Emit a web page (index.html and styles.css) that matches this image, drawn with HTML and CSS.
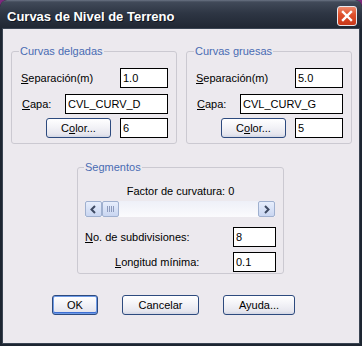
FILE: index.html
```html
<!DOCTYPE html>
<html lang="es">
<head>
  <meta charset="UTF-8">
  <title>Curvas de Nivel de Terreno</title>
  <link rel="stylesheet" href="styles.css">
</head>
<body>
  <div class="window">
    <div class="titlebar">
      <span class="title">Curvas de Nivel de Terreno</span>
      <span class="close">
        <svg width="12" height="12" viewBox="0 0 12 12"><path d="M2 2 L10 10 M10 2 L2 10" stroke="#fff" stroke-width="2.4" stroke-linecap="square"/></svg>
      </span>
    </div>

    <div class="client">
      <div class="groups">
        <fieldset class="group">
          <legend>Curvas delgadas</legend>
          <div class="row">
            <label><u>S</u>eparación(m)</label>
            <input type="text" class="field short" value="1.0">
          </div>
          <div class="row capa">
            <label><u>C</u>apa:</label>
            <input type="text" class="field long" value="CVL_CURV_D">
          </div>
          <div class="row color">
            <button class="btn colorbtn">C<u>o</u>lor...</button>
            <input type="text" class="field short" value="6">
          </div>
        </fieldset>

        <fieldset class="group">
          <legend>Curvas gruesas</legend>
          <div class="row">
            <label><u>S</u>eparación(m)</label>
            <input type="text" class="field short" value="5.0">
          </div>
          <div class="row capa">
            <label><u>C</u>apa:</label>
            <input type="text" class="field long" value="CVL_CURV_G">
          </div>
          <div class="row color">
            <button class="btn colorbtn">C<u>o</u>lor...</button>
            <input type="text" class="field short" value="5">
          </div>
        </fieldset>
      </div>

      <fieldset class="group segments">
        <legend>Segmentos</legend>
        <div class="factor">Factor de curvatura: 0</div>
        <div class="scrollbar">
          <span class="sb-btn">
            <svg width="9" height="9" viewBox="0 0 9 9"><path d="M6 1 L2.5 4.5 L6 8" fill="none" stroke="#3e4a63" stroke-width="2"/></svg>
          </span>
          <span class="sb-thumb">
            <svg width="7" height="6" viewBox="0 0 7 6"><path d="M0.5 0 V6 M2.5 0 V6 M4.5 0 V6 M6.5 0 V6" stroke="#8d9bbd" stroke-width="1"/></svg>
          </span>
          <span class="sb-track"></span>
          <span class="sb-btn">
            <svg width="9" height="9" viewBox="0 0 9 9"><path d="M3 1 L6.5 4.5 L3 8" fill="none" stroke="#3e4a63" stroke-width="2"/></svg>
          </span>
        </div>
        <div class="row seg">
          <label><u>N</u>o. de subdivisiones:</label>
          <input type="text" class="field num" value="8">
        </div>
        <div class="row seg minimo">
          <label><u>L</u>ongitud mínima:</label>
          <input type="text" class="field num" value="0.1">
        </div>
      </fieldset>

      <div class="actions">
        <button class="btn ok">OK</button>
        <button class="btn cancel">Cancelar</button>
        <button class="btn help">Ayuda...</button>
      </div>
    </div>
  </div>
</body>
</html>
```

FILE: styles.css
```css
body {
  margin: 0;
  background: #7d2a7d;
  font-family: "Liberation Sans", Arial, sans-serif;
  font-size: 11px;
}
.window {
  width: 362px;
  height: 346px;
  box-sizing: border-box;
  background: #1d2531;
  border-radius: 7px 7px 0 0;
  display: flex;
  flex-direction: column;
  overflow: hidden;
}
.titlebar {
  height: 29px;
  flex: none;
  display: flex;
  align-items: center;
  justify-content: space-between;
  padding: 3px 5px 0 7px;
  box-sizing: border-box;
  background: linear-gradient(to bottom, #6b7484 0, #414a59 2px, #2e3644 45%, #1f2632 100%);
  border-radius: 7px 7px 0 0;
}
.title {
  color: #fff;
  font-size: 13px;
  font-weight: bold;
  text-shadow: 1px 1px 0 #101520;
}
.close {
  width: 20px;
  height: 20px;
  box-sizing: border-box;
  margin-top: -1px;
  border: 1px solid #e8e8ee;
  border-radius: 3px;
  background: linear-gradient(to bottom, #ee8a6c 0, #e0522e 40%, #c8381a 100%);
  display: flex;
  align-items: center;
  justify-content: center;
}
.client {
  flex: 1;
  margin: 0 3px 3px;
  background: #ece9ee;
  padding: 16px 0 0;
  box-shadow: 0 0 0 1px #3a4452;
}
.groups {
  display: flex;
  gap: 9px;
  padding-left: 8px;
}
.group {
  margin: 0;
  width: 166px;
  box-sizing: border-box;
  padding: 10px 8px 5px 9px;
  border: 1px solid #cbc9d1;
  border-radius: 3px;
}
.group legend {
  color: #4a6cb3;
  line-height: 13px;
  padding: 0 1px;
  margin-left: -2px;
}
.row {
  display: flex;
  align-items: center;
  height: 20px;
}
.row + .row {
  margin-top: 6px;
}
.row.color {
  margin-top: 4px;
}
.row.capa label {
  margin-left: 1px;
}
.field {
  margin-left: auto;
  height: 20px;
  box-sizing: border-box;
  border: 1px solid #000;
  background: #fff;
  padding: 0 2px;
  font-family: inherit;
  font-size: 11px;
  color: #000;
  outline: none;
}
.short {
  width: 48px;
}
.long {
  width: 103px;
}
.num {
  width: 43px;
}
.btn {
  height: 20px;
  box-sizing: border-box;
  border: 1px solid #2d4a7e;
  border-radius: 3px;
  background: linear-gradient(to bottom, #ffffff 0, #f4f4f8 40%, #e6e6ee 85%, #d2d6e4 100%);
  font-family: inherit;
  font-size: 11px;
  color: #000;
  padding: 0;
}
.colorbtn {
  width: 65px;
  margin-left: 25px;
}
.segments {
  width: 207px;
  margin: 17px 0 0 74px;
  padding: 11px 7px 1px 7px;
}
.segments legend {
  margin-left: -1px;
}
.factor {
  text-align: center;
  line-height: 13px;
}
.scrollbar {
  display: flex;
  height: 16px;
  margin-top: 3px;
  width: 190px;
  background: linear-gradient(to bottom, #eef0f8, #fbfbfd);
}
.sb-btn, .sb-thumb {
  width: 17px;
  height: 16px;
  box-sizing: border-box;
  border: 1px solid #9fb0cf;
  border-radius: 2px;
  background: linear-gradient(to bottom, #e7eefc, #c9d6f1);
  display: flex;
  align-items: center;
  justify-content: center;
}
.sb-track {
  flex: 1;
}
.row.seg {
  margin-top: 10px;
}
.row.seg.minimo {
  margin-top: 5px;
}
.minimo label {
  margin-left: 30px;
}
.actions {
  display: flex;
  gap: 24px;
  margin-top: 21px;
  padding-left: 49px;
}
.ok {
  width: 46px;
  box-shadow: inset 0 0 0 1px #6f9be6, inset 0 -1px 0 1px #3d6fd4;
}
.cancel {
  width: 77px;
}
.help {
  width: 72px;
}
```
